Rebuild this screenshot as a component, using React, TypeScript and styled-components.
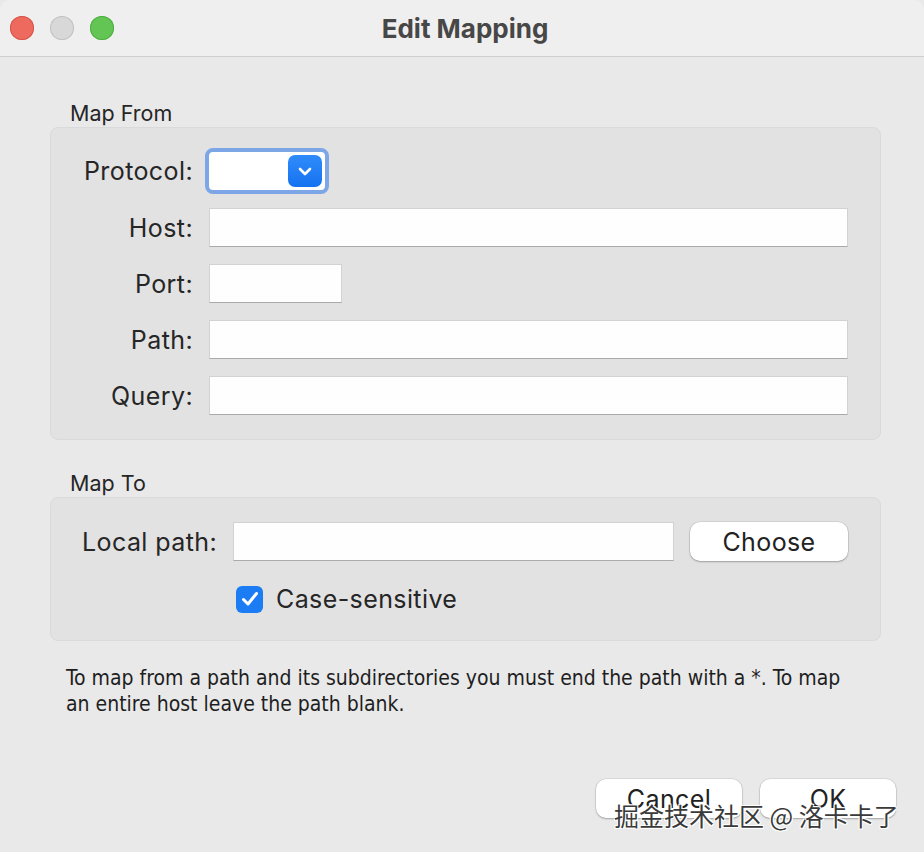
import styled, { createGlobalStyle } from "styled-components";

const GlobalStyle = createGlobalStyle`
  html, body {
    margin: 0;
    padding: 0;
    background: #e9e9e9;
  }
  body {
    font-family: Inter, "Noto Sans", "Liberation Sans", sans-serif;
    color: #222;
  }
`;

function App() {
  return (
    <Window>
      <GlobalStyle />
      <TitleBar>
        <Lights>
          <Light color="#ee6a5f" edge="#d5554b" />
          <Light color="#d8d8d8" edge="#c2c2c2" />
          <Light color="#62c554" edge="#4fae42" />
        </Lights>
        <Title>Edit Mapping</Title>
      </TitleBar>

      <Body>
        <SectionTitle>Map From</SectionTitle>
        <Group>
          <FromGrid>
            <Label>Protocol:</Label>
            <PopUp>
              <PopUpArrow>
                <svg width="14" height="9" viewBox="0 0 14 9">
                  <path
                    d="M2 2 L7 7 L12 2"
                    fill="none"
                    stroke="#fff"
                    strokeWidth="2.6"
                    strokeLinecap="round"
                    strokeLinejoin="round"
                  />
                </svg>
              </PopUpArrow>
            </PopUp>
            <Label>Host:</Label>
            <Field />
            <Label>Port:</Label>
            <Field width="133px" />
            <Label>Path:</Label>
            <Field />
            <Label>Query:</Label>
            <Field />
          </FromGrid>
        </Group>

        <SectionTitle spaced>Map To</SectionTitle>
        <Group>
          <ToGrid>
            <Label>Local path:</Label>
            <Field />
            <Button width="158px">Choose</Button>
            <span />
            <CheckRow>
              <CheckBox>
                <svg width="18" height="16" viewBox="0 0 18 16">
                  <path
                    d="M2.5 8.5 L7 13 L15.5 2.5"
                    fill="none"
                    stroke="#fff"
                    strokeWidth="3"
                    strokeLinecap="round"
                    strokeLinejoin="round"
                  />
                </svg>
              </CheckBox>
              Case-sensitive
            </CheckRow>
          </ToGrid>
        </Group>

        <Hint>
          To map from a path and its subdirectories you must end the path with a *. To map
          an entire host leave the path blank.
        </Hint>
      </Body>

      <Footer>
        <Button width="146px">Cancel</Button>
        <Button width="136px">OK</Button>
      </Footer>

      <Watermark>掘金技术社区 @ 洛卡卡了</Watermark>
    </Window>
  );
}
export default App;

const Window = styled.div`
  position: relative;
  width: 924px;
  height: 852px;
  background: #e9e9e9;
  overflow: hidden;
  display: flex;
  flex-direction: column;
  border-radius: 10px 10px 0 0;
`;

const TitleBar = styled.div`
  position: relative;
  height: 57px;
  flex: none;
  display: flex;
  align-items: center;
  justify-content: center;
  background: #efefef;
  border-bottom: 1px solid #cfcfcf;
  box-sizing: border-box;
`;

const Lights = styled.div`
  position: absolute;
  left: 10px;
  top: 16px;
  display: flex;
  gap: 16px;
`;

const Light = styled.span<{ color: string; edge: string }>`
  width: 24px;
  height: 24px;
  border-radius: 50%;
  background: ${(p) => p.color};
  box-shadow: inset 0 0 0 1px ${(p) => p.edge};
`;

const Title = styled.div`
  font-size: 26px;
  font-weight: 700;
  color: #474747;
  margin-left: 6px;
`;

const Body = styled.div`
  padding: 44px 43px 0 50px;
  display: flex;
  flex-direction: column;
`;

const SectionTitle = styled.div<{ spaced?: boolean }>`
  margin: ${(p) => (p.spaced ? "31px" : "0")} 0 2px 20px;
  font-size: 21.5px;
  line-height: 24px;
  color: #262626;
`;

const Group = styled.div`
  background: #e2e2e2;
  border: 1px solid #dadada;
  border-radius: 8px;
`;

const FromGrid = styled.div`
  display: grid;
  grid-template-columns: 111px 1fr;
  column-gap: 16px;
  row-gap: 17px;
  align-items: center;
  padding: 23px 32px 24px 31px;
`;

const ToGrid = styled.div`
  display: grid;
  grid-template-columns: 135px 1fr 158px;
  column-gap: 16px;
  row-gap: 23px;
  align-items: center;
  padding: 24px 32px 26px 31px;
`;

const Label = styled.div`
  font-size: 25px;
  letter-spacing: 0.4px;
  color: #262626;
  text-align: right;
  white-space: nowrap;
`;

const Field = styled.div<{ width?: string }>`
  width: ${(p) => p.width ?? "auto"};
  height: 39px;
  box-sizing: border-box;
  background: #fefefe;
  border: 1px solid #d2d2d2;
  border-bottom-color: #aaaaaa;
`;

const PopUp = styled.div`
  width: 124px;
  height: 46px;
  margin: -3px 0 -3px -4px;
  box-sizing: border-box;
  border: 4px solid #7da6e6;
  border-radius: 8px;
  background: #fff;
  display: flex;
  justify-content: flex-end;
  align-items: center;
  padding-right: 3px;
`;

const PopUpArrow = styled.div`
  width: 34px;
  height: 32px;
  border-radius: 7px;
  background: linear-gradient(#2f8bfb, #1673f0);
  display: flex;
  align-items: center;
  justify-content: center;
`;

const Button = styled.div<{ width: string }>`
  width: ${(p) => p.width};
  height: 39px;
  box-sizing: border-box;
  display: flex;
  align-items: center;
  justify-content: center;
  background: #fff;
  border-radius: 10px;
  box-shadow: 0 0 0 0.5px rgba(0, 0, 0, 0.12), 0 1px 2px rgba(0, 0, 0, 0.25);
  font-size: 25px;
  letter-spacing: 0.4px;
  color: #222;
`;

const CheckRow = styled.div`
  grid-column: 2 / 4;
  display: flex;
  align-items: center;
  gap: 13px;
  margin-left: 3px;
  font-size: 25px;
  letter-spacing: 0.4px;
  color: #262626;
`;

const CheckBox = styled.span`
  width: 27px;
  height: 27px;
  border-radius: 6px;
  background: #1b7cf4;
  display: flex;
  align-items: center;
  justify-content: center;
`;

const Hint = styled.p`
  margin: 24px 0 0 16px;
  max-width: 795px;
  font-family: "DejaVu Sans Condensed", "Liberation Sans", sans-serif;
  font-size: 21px;
  line-height: 26px;
  color: #1e1e1e;
`;

const Footer = styled.div`
  margin-top: auto;
  padding: 0 28px 34px 0;
  display: flex;
  justify-content: flex-end;
  gap: 18px;
`;

const Watermark = styled.div`
  position: absolute;
  left: 614px;
  top: 797px;
  font-family: "Noto Sans CJK SC", sans-serif;
  font-size: 25px;
  color: #3a3a3a;
  text-shadow: 1px 1px 0 #fff, -1px -1px 0 #fff, 1px -1px 0 #fff, -1px 1px 0 #fff;
  white-space: nowrap;
`;
